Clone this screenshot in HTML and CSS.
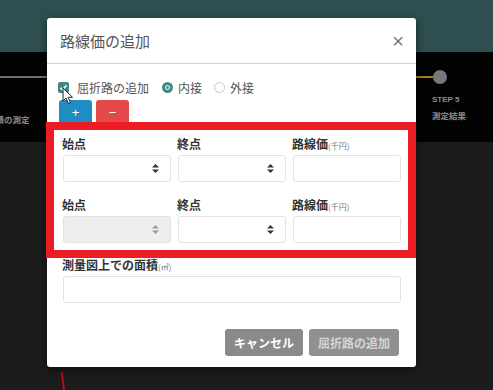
FILE: index.html
```html
<!DOCTYPE html>
<html lang="ja">

<head>
    <meta charset="UTF-8">
    <meta name="viewport" content="width=device-width, initial-scale=1.0">
    <title>路線価の追加</title>
    <link rel="stylesheet" href="styles.css">
</head>

<body>
    <div class="page">
        <div class="topbar"></div>
        <div class="stepper">
            <div class="track">
                <span class="seg done"></span>
                <span class="seg current"></span>
                <span class="dot"></span>
            </div>
            <div class="steps">
                <div class="step step-first"><span class="step-name">面積の測定</span></div>
                <div class="step step-last">
                    <span class="step-no">STEP 5</span>
                    <span class="step-name">測定結果</span>
                </div>
            </div>
        </div>
        <div class="content">
            <span class="red-mark"></span>
        </div>
    </div>

    <div class="modal">
        <div class="modal-header">
            <h4 class="modal-title">路線価の追加</h4>
            <span class="close">&times;</span>
        </div>
        <div class="modal-body">
            <div class="options">
                <span class="check">
                    <svg width="9" height="9" viewBox="0 0 9 9"><path d="M1.5 4.8 L3.6 6.8 L7.6 2.2" fill="none" stroke="#fff" stroke-width="1.6"/></svg>
                </span>
                <span class="opt-label">屈折路の追加</span>
                <span class="radio on"></span>
                <span class="opt-label">内接</span>
                <span class="radio"></span>
                <span class="opt-label">外接</span>
            </div>
            <div class="add-remove">
                <button class="btn-plus">+</button>
                <button class="btn-minus">&minus;</button>
            </div>

            <div class="field-grid">
                <label>始点</label>
                <label>終点</label>
                <label>路線価<small>(千円)</small></label>
                <div class="select"><svg width="7" height="9" viewBox="0 0 7 9"><path d="M3.5 0 L7 3.6 H0 Z M0 5.4 H7 L3.5 9 Z" fill="#333"/></svg></div>
                <div class="select"><svg width="7" height="9" viewBox="0 0 7 9"><path d="M3.5 0 L7 3.6 H0 Z M0 5.4 H7 L3.5 9 Z" fill="#333"/></svg></div>
                <div class="text-input"></div>
            </div>

            <div class="field-grid second">
                <label>始点</label>
                <label>終点</label>
                <label>路線価<small>(千円)</small></label>
                <div class="select disabled"><svg width="7" height="9" viewBox="0 0 7 9"><path d="M3.5 0 L7 3.6 H0 Z M0 5.4 H7 L3.5 9 Z" fill="#999"/></svg></div>
                <div class="select"><svg width="7" height="9" viewBox="0 0 7 9"><path d="M3.5 0 L7 3.6 H0 Z M0 5.4 H7 L3.5 9 Z" fill="#333"/></svg></div>
                <div class="text-input"></div>
            </div>

            <div class="area">
                <label>測量図上での面積<small>(㎡)</small></label>
                <div class="text-input"></div>
            </div>

            <div class="modal-footer">
                <button class="btn-gray">キャンセル</button>
                <button class="btn-gray disabled">屈折路の追加</button>
            </div>
        </div>
    </div>

    <div class="highlight"></div>

    <svg class="cursor" width="14" height="18" viewBox="0 0 14 18">
        <path d="M1 1 L1 14 L4 11 L6.5 16.5 L8.5 15.6 L6.2 10.3 L10.5 10.3 Z" fill="#fff" stroke="#222" stroke-width="1"/>
    </svg>
</body>

</html>
```

FILE: styles.css
```css
* {
    box-sizing: border-box;
}

body {
    margin: 0;
    width: 493px;
    height: 390px;
    overflow: hidden;
    font-family: "Noto Sans CJK JP", "Noto Sans", sans-serif;
    background-color: #1c1c1c;
    position: relative;
}

/* fond derrière la modale */
.topbar {
    height: 52px;
    background: #2e4e50;
}

.stepper {
    height: 90px;
    background: #030303;
    padding-top: 18px;
}

.track {
    display: flex;
    align-items: center;
    height: 14px;
    padding-right: 46px;
}

.seg {
    height: 2px;
}

.seg.done {
    width: 250px;
    background: #6f6f6f;
}

.seg.current {
    flex: 1;
    background: #a77d1c;
}

.dot {
    width: 14px;
    height: 14px;
    border-radius: 50%;
    background: #77787a;
}

.steps {
    display: flex;
    justify-content: space-between;
    margin-top: 11px;
}

.step {
    display: flex;
    flex-direction: column;
    color: #8a8a8a;
}

.step-first {
    margin-left: -13px;
    padding-top: 14px;
}

.step-last {
    width: 44px;
    margin-right: 17px;
}

.step-no {
    font-family: "Liberation Sans", sans-serif;
    font-size: 8px;
    font-weight: bold;
    line-height: 10px;
}

.step-name {
    font-size: 8.5px;
    font-weight: bold;
    line-height: 12px;
    margin-top: 4px;
}

.content {
    height: 248px;
    padding: 230px 0 0 62px;
}

.red-mark {
    display: block;
    width: 2px;
    height: 20px;
    background: #b01010;
    transform: rotate(-6deg);
}

/* modale */
.modal {
    position: absolute;
    left: 47px;
    top: 18px;
    width: 369px;
    height: 349px;
    background: #fff;
    border-radius: 3px;
    box-shadow: 0 3px 9px rgba(0, 0, 0, 0.5);
}

.modal-header {
    height: 46px;
    display: flex;
    align-items: center;
    justify-content: space-between;
    padding: 0 12px 0 13px;
    border-bottom: 1px solid #d0d0d0;
}

.modal-title {
    margin: 0;
    font-size: 15px;
    font-weight: normal;
    color: #555;
}

.close {
    font-family: "Liberation Sans", sans-serif;
    font-size: 20px;
    color: #777;
    line-height: 1;
}

.modal-body {
    padding: 0 15px;
}

.options {
    display: flex;
    align-items: center;
    height: 22px;
    margin-top: 12px;
    margin-left: -4px;
    font-size: 12px;
    color: #555;
}

.check {
    width: 11px;
    height: 11px;
    border-radius: 2px;
    background: #3f8a85;
    display: flex;
    align-items: center;
    justify-content: center;
    margin-right: 8px;
}

.radio {
    width: 11px;
    height: 11px;
    border-radius: 50%;
    border: 1px solid #c8c8c8;
    margin: 0 5px 0 12px;
}

.radio.on {
    border: 3px solid #3f8a85;
    box-shadow: inset 0 0 0 1px #fff;
    background: #3f8a85;
    margin-left: 13px;
}

.add-remove {
    display: flex;
    gap: 4px;
    margin-top: 2px;
    margin-left: -3px;
}

.add-remove button {
    width: 33px;
    height: 30px;
    border: none;
    border-radius: 3px;
    color: #fff;
    font-size: 13px;
    padding: 0 0 6px;
}

.btn-plus {
    background: #1f8cc4;
}

.btn-minus {
    background: #e54848;
}

.field-grid {
    display: grid;
    grid-template-columns: 1fr 1fr 1fr;
    column-gap: 6px;
    row-gap: 3px;
    margin-top: 6px;
}

.field-grid.second {
    margin-top: 15px;
}

label {
    display: block;
    height: 16px;
    overflow: visible;
    white-space: nowrap;
    font-size: 12px;
    font-weight: bold;
    line-height: 16px;
    color: #333;
}

label small {
    font-size: 8px;
    font-weight: normal;
    line-height: 1;
    color: #777;
}

.select,
.text-input {
    height: 27px;
    border: 1px solid #e2e2e2;
    border-radius: 3px;
    background: #fff;
    margin-left: 1px;
}

.select {
    display: flex;
    align-items: center;
    justify-content: flex-end;
    padding-right: 11px;
}

.select.disabled {
    background: #eeeeee;
}

.area {
    margin-top: 14px;
}

.area label {
    margin-bottom: 3px;
}

.modal-footer {
    display: flex;
    justify-content: flex-end;
    gap: 6px;
    margin-top: 26px;
    padding-right: 2px;
}

.btn-gray {
    height: 27px;
    padding: 0 9px;
    border: none;
    border-radius: 3px;
    background: #8a8a8a;
    color: #fff;
    font-family: inherit;
    font-size: 12px;
    font-weight: bold;
}

.btn-gray.disabled {
    background: #909090;
    color: #d4d4d4;
}

/* cadre rouge d'annotation */
.highlight {
    position: absolute;
    left: 46px;
    top: 122px;
    width: 370px;
    height: 136px;
    border: 8px solid #ec1c24;
}

.cursor {
    position: absolute;
    left: 62px;
    top: 87px;
}
```
